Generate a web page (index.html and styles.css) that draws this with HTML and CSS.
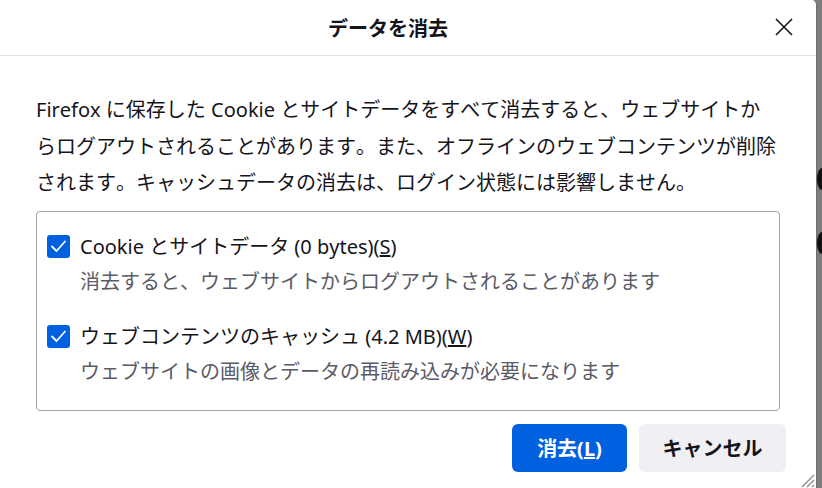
FILE: index.html
```html
<!DOCTYPE html>
<html lang="ja">
<head>
<meta charset="utf-8">
<title>データを消去</title>
<link rel="stylesheet" href="styles.css">
</head>
<body>
<div class="page">
  <div class="dialog">
    <header class="header">
      <h1 class="title">データを消去</h1>
      <button class="close" aria-label="閉じる">
        <svg width="18" height="18" viewBox="0 0 18 18"><path d="M1 1 L17 17 M17 1 L1 17" stroke="#15141a" stroke-width="1.6" fill="none"/></svg>
      </button>
    </header>
    <main class="body">
      <p class="intro">Firefox に保存した Cookie とサイトデータをすべて消去すると、ウェブサイトからログアウトされることがあります。また、オフラインのウェブコンテンツが削除されます。キャッシュデータの消去は、ログイン状態には影響しません。</p>
      <div class="group">
        <div class="item">
          <label class="row">
            <span class="check"><svg width="23" height="23" viewBox="0 0 23 23"><path d="M5 11.5 L9.5 16 L18 6.5" stroke="#fff" stroke-width="1.8" fill="none" stroke-linecap="round" stroke-linejoin="round"/></svg></span>
            <span class="label">Cookie とサイトデータ (0 bytes)(<u>S</u>)</span>
          </label>
          <div class="desc">消去すると、ウェブサイトからログアウトされることがあります</div>
        </div>
        <div class="item">
          <label class="row">
            <span class="check"><svg width="23" height="23" viewBox="0 0 23 23"><path d="M5 11.5 L9.5 16 L18 6.5" stroke="#fff" stroke-width="1.8" fill="none" stroke-linecap="round" stroke-linejoin="round"/></svg></span>
            <span class="label">ウェブコンテンツのキャッシュ (4.2 MB)(<u>W</u>)</span>
          </label>
          <div class="desc">ウェブサイトの画像とデータの再読み込みが必要になります</div>
        </div>
      </div>
      <div class="buttons">
        <button class="btn primary">消去(<u>L</u>)</button>
        <button class="btn secondary">キャンセル</button>
      </div>
    </main>
    <svg class="grip" width="17" height="17" viewBox="0 0 17 17"><path d="M16 4 L4 16 M16 9 L9 16 M16 14 L14 16" stroke="#8a8a8a" stroke-width="1.3" fill="none"/></svg>
  </div>
  <div class="backdrop">
    <span class="blob"></span>
    <span class="blob second"></span>
  </div>
</div>
</body>
</html>
```

FILE: styles.css
```css
* { box-sizing: border-box; }
html, body {
  margin: 0;
  padding: 0;
  width: 822px;
  height: 488px;
  overflow: hidden;
  background: #7d7d7d;
}
body {
  font-family: "Noto Sans", "Noto Sans CJK JP", sans-serif;
  font-kerning: none;
  color: #15141a;
}
.page {
  display: flex;
  width: 822px;
  height: 488px;
}
.dialog {
  position: relative;
  width: 817px;
  height: 488px;
  background: #fff;
  border-top-right-radius: 5px;
  display: flex;
  flex-direction: column;
  border-right: 1px solid #6e6e6e;
}
.header {
  height: 56px;
  flex: none;
  display: flex;
  align-items: center;
  border-bottom: 1px solid #e0e0e6;
  padding-right: 16px;
}
.title {
  flex: 1;
  margin: 0;
  padding-left: 8px;
  text-align: center;
  font-size: 20px;
  font-weight: 700;
  line-height: 28px;
  font-family: "Noto Sans CJK JP", sans-serif;
}
.close {
  width: 32px;
  height: 32px;
  border: 0;
  padding: 0;
  background: transparent;
  display: flex;
  align-items: center;
  justify-content: center;
  margin-top: -2px;
}
.body {
  padding: 36px 30px 0 36px;
  display: flex;
  flex-direction: column;
}
.intro {
  margin: 0 6px 0 0;
  font-size: 20px;
  line-height: 36.5px;
}
.group {
  margin-top: 9px;
  margin-right: 6px;
  border: 1px solid #a3a3a8;
  border-radius: 4px;
  padding: 20px 10px 23px 10px;
  display: flex;
  flex-direction: column;
  gap: 25px;
}
.row {
  display: flex;
  align-items: center;
  gap: 10px;
  height: 30px;
}
.check {
  width: 23px;
  height: 23px;
  flex: none;
  background: #0061e0;
  border-radius: 3px;
  display: flex;
}
.label {
  font-size: 20px;
  line-height: 30px;
}
.desc {
  margin-top: 5px;
  margin-left: 33px;
  font-size: 20px;
  line-height: 30px;
  color: #5b5b66;
}
.buttons {
  margin-top: 13px;
  display: flex;
  justify-content: flex-end;
  gap: 12px;
}
.btn {
  height: 48px;
  border: 0;
  border-radius: 6px;
  font-family: "Noto Sans", "Noto Sans CJK JP", sans-serif;
  font-kerning: none;
  font-size: 20px;
  font-weight: 700;
  padding: 0;
}
.primary {
  width: 115px;
  background: #0061e0;
  color: #fff;
}
.secondary {
  width: 147px;
  background: #f0f0f4;
  color: #15141a;
}
.grip {
  position: absolute;
  right: 1px;
  bottom: 0;
}
.backdrop {
  flex: 1;
  display: flex;
  flex-direction: column;
  padding-top: 168px;
  overflow: hidden;
}
.blob {
  display: block;
  width: 10px;
  height: 22px;
  border-radius: 50%;
  background: #111;
  flex: none;
}
.blob.second {
  margin-top: 42px;
}
```
